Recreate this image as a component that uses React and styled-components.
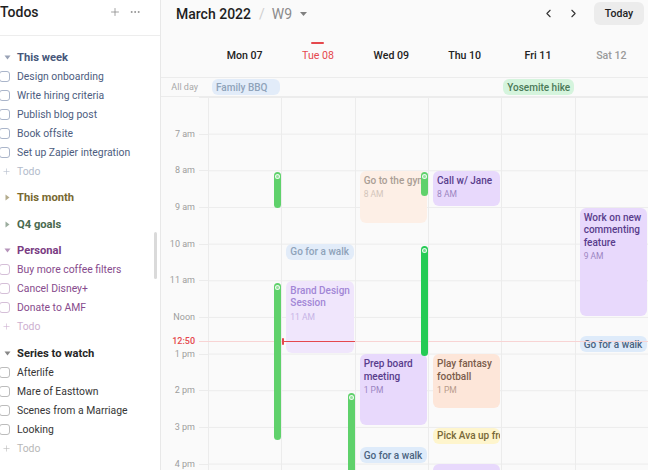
import React from "react";
import styled, { createGlobalStyle } from "styled-components";
import { ChevronLeft, ChevronRight, Plus, Ellipsis } from "lucide-react";

const HOUR = 36.67;
const START = 6;
const TODAY = 1;
const NOW = 12.654;

const GlobalStyle = createGlobalStyle`
  html, body { margin: 0; padding: 0; }
  body {
    font-family: Roboto, "Noto Sans", sans-serif;
    background: #fff;
    color: #222;
    -webkit-font-smoothing: antialiased;
  }
  * { box-sizing: border-box; }
`;

const Page = styled.div`
  display: flex;
  width: 648px;
  height: 470px;
  overflow: hidden;
`;

/* ---------- sidebar ---------- */

const tones = {
  slate: { title: "#47577a", text: "#4d5d80", box: "#aab5ca", add: "#b3bccb" },
  olive: { title: "#776830", text: "#776830", box: "#cfc49a", add: "#c7bf9c" },
  green: { title: "#4a6a4f", text: "#4a6a4f", box: "#a9c0ab", add: "#b5c5b6" },
  plum: { title: "#7a3c83", text: "#874b8d", box: "#d5bfd8", add: "#cdb0d0" },
  ink: { title: "#262626", text: "#363636", box: "#bcbcbc", add: "#b8b8b8" },
};

const Sidebar = styled.aside`
  position: relative;
  width: 161px;
  flex-shrink: 0;
  background: #fff;
  border-right: 1px solid #e8e8e8;
  overflow: hidden;
`;

const SidebarHeader = styled.div`
  height: 36px;
  display: flex;
  align-items: center;
  padding: 0 19px 12px 0;
  border-bottom: 1px solid #ededed;
`;

const SidebarTitle = styled.div`
  flex: 1;
  font-size: 14px;
  font-weight: 500;
  color: #1f1f1f;
`;

const HeaderIcon = styled.span`
  display: flex;
  color: #8a8a8a;
  margin-left: 8px;
`;

const TodoList = styled.div`
  padding-top: 11.5px;
`;

const Section = styled.div`
  margin-bottom: 7.6px;
`;

const SectionHead = styled.div`
  height: 19px;
  display: flex;
  align-items: center;
  font-size: 11.2px;
  font-weight: 700;
  color: ${(p) => tones[p.$tone].title};
`;

const Caret = styled.span`
  width: 17px;
  display: flex;
  padding-left: ${(p) => (p.$open ? "4px" : "5px")};
  color: ${(p) => tones[p.$tone].title};
  opacity: 0.55;
`;

const Row = styled.div`
  height: 19px;
  display: flex;
  align-items: center;
  font-size: 10.4px;
  color: ${(p) => tones[p.$tone].text};
  white-space: nowrap;
`;

const Check = styled.span`
  width: 11px;
  height: 11px;
  margin-left: -1px;
  margin-right: 7px;
  border: 1px solid ${(p) => tones[p.$tone].box};
  border-radius: 3px;
  background: #fff;
  flex-shrink: 0;
`;

const AddRow = styled(Row)`
  color: ${(p) => tones[p.$tone].add};
`;

const AddIcon = styled.span`
  width: 17px;
  display: flex;
  padding-left: 2px;
`;

const ScrollThumb = styled.div`
  position: absolute;
  right: 3px;
  top: 232px;
  width: 3px;
  height: 47px;
  border-radius: 2px;
  background: #dadada;
`;

const sections = [
  {
    title: "This week",
    tone: "slate",
    open: true,
    items: [
      "Design onboarding",
      "Write hiring criteria",
      "Publish blog post",
      "Book offsite",
      "Set up Zapier integration",
    ],
  },
  { title: "This month", tone: "olive", open: false, items: [] },
  { title: "Q4 goals", tone: "green", open: false, items: [] },
  {
    title: "Personal",
    tone: "plum",
    open: true,
    items: ["Buy more coffee filters", "Cancel Disney+", "Donate to AMF"],
  },
  {
    title: "Series to watch",
    tone: "ink",
    open: true,
    items: ["Afterlife", "Mare of Easttown", "Scenes from a Marriage", "Looking"],
  },
];

const CaretIcon = ({ open }) =>
  open ? (
    <svg width="7" height="5" viewBox="0 0 7 5">
      <path d="M0.5 0.5h6L3.5 4.5z" fill="currentColor" />
    </svg>
  ) : (
    <svg width="5" height="7" viewBox="0 0 5 7">
      <path d="M0.5 0.5v6L4.5 3.5z" fill="currentColor" />
    </svg>
  );

/* ---------- calendar ---------- */

const Main = styled.main`
  flex: 1;
  min-width: 0;
  display: flex;
  flex-direction: column;
  background: #fafafa;
`;

const Toolbar = styled.div`
  height: 27px;
  flex-shrink: 0;
  display: flex;
  align-items: center;
  padding: 0 4px 0 15px;
`;

const Title = styled.div`
  flex: 1;
  display: flex;
  align-items: center;
  font-size: 14px;
  font-weight: 500;
  color: #1e1e1e;
`;

const Slash = styled.span`
  color: #cfcfcf;
  font-weight: 400;
  margin: 0 7px 0 8px;
`;

const Week = styled.span`
  color: #8b8b8b;
  font-weight: 400;
`;

const WeekCaret = styled.span`
  display: flex;
  color: #808080;
  margin-left: 8px;
`;

const NavButton = styled.button`
  width: 25px;
  height: 23px;
  display: flex;
  align-items: center;
  justify-content: center;
  border: 0;
  background: transparent;
  color: #333;
  padding: 0;
`;

const TodayButton = styled.button`
  margin-left: 8px;
  width: 50px;
  height: 23px;
  border: 0;
  border-radius: 6px;
  background: #ececec;
  font-family: inherit;
  font-size: 10.5px;
  font-weight: 500;
  color: #222;
`;

const Columns = styled.div`
  flex: 1;
  display: grid;
  grid-template-columns: repeat(6, 1fr);
`;

const Gutter = styled.div`
  width: 47px;
  flex-shrink: 0;
`;

const DayHeadRow = styled.div`
  height: 51px;
  flex-shrink: 0;
  display: flex;
  border-bottom: 1px solid #ececec;
`;

const DayHead = styled.div`
  display: flex;
  flex-direction: column;
  align-items: center;
  justify-content: flex-end;
  padding-bottom: 13px;
  font-size: 10.6px;
  font-weight: ${(p) => (p.$today ? 400 : 500)};
  line-height: 16px;
  color: ${(p) => (p.$today ? "#e5484d" : p.$weekend ? "#9a9a9a" : "#222")};
`;

const TodayMark = styled.span`
  width: 13px;
  height: 2px;
  border-radius: 1px;
  background: ${(p) => (p.$on ? "#e5484d" : "transparent")};
  margin-bottom: 4px;
`;

const AllDayRow = styled.div`
  height: 19px;
  flex-shrink: 0;
  display: flex;
  align-items: center;
  border-bottom: 1px solid #ececec;
`;

const AllDayLabel = styled(Gutter)`
  text-align: right;
  padding-right: 10px;
  font-size: 9px;
  color: #a8a8a8;
`;

const AllDayCell = styled.div`
  padding: 0 1px 0 4px;
`;

const Body = styled.div`
  flex: 1;
  position: relative;
  display: flex;
  overflow: hidden;
`;

const TimeGutter = styled(Gutter)`
  display: flex;
  flex-direction: column;
`;

const HourSlot = styled.div`
  position: relative;
  height: ${HOUR}px;
  flex-shrink: 0;
  &::after {
    content: "";
    position: absolute;
    top: 0;
    right: 0;
    width: 9px;
    height: 1px;
    background: #ececec;
  }
`;

const HourLabel = styled.div`
  margin-top: -6px;
  padding-right: 13px;
  text-align: right;
  font-size: 9px;
  line-height: 12px;
  color: #9d9d9d;
  visibility: ${(p) => (p.$hidden ? "hidden" : "visible")};
`;

const Grid = styled(Columns)`
  align-self: flex-start;
  height: ${HOUR * 11}px;
  background-image: linear-gradient(to bottom, #ececec 1px, transparent 1px);
  background-size: 100% ${HOUR}px;
`;

const DayColumn = styled.div`
  position: relative;
  border-left: 1px solid #ececec;
`;

const eventTones = {
  purple: { bg: "#e8d9fc", fg: "#593d8c", sub: "#9c86c2" },
  purplePast: { bg: "#f0e6fc", fg: "#a287d6", sub: "#c6b4e6" },
  peach: { bg: "#fde6d9", fg: "#7b5c4b", sub: "#b89b8b" },
  peachPast: { bg: "#fdefe6", fg: "#aa9e95", sub: "#d3c5bb" },
  blue: { bg: "#deebfa", fg: "#4a6380", sub: "#8aa0b8" },
  bluePast: { bg: "#e2ecf9", fg: "#8fa3ba", sub: "#b0c0d0" },
  yellow: { bg: "#fef5cd", fg: "#786838", sub: "#b0a070" },
  green: { bg: "#d5f4dd", fg: "#4b7a58", sub: "#86aa90" },
};

const Event = styled.div`
  position: absolute;
  left: 4px;
  right: 1px;
  border-radius: 6px;
  overflow: hidden;
  padding: 4px 1px 4px 4px;
  background: ${(p) => eventTones[p.$tone].bg};
  color: ${(p) => eventTones[p.$tone].fg};
  font-size: 10px;
  font-weight: 500;
  line-height: 12.5px;
  white-space: ${(p) => (p.$nowrap ? "nowrap" : "normal")};
`;

const Pill = styled.div`
  height: 16px;
  display: flex;
  align-items: center;
  padding: 0 4px;
  border-radius: 6px;
  overflow: hidden;
  white-space: nowrap;
  background: ${(p) => eventTones[p.$tone].bg};
  color: ${(p) => eventTones[p.$tone].fg};
  font-size: 10px;
  font-weight: 500;
`;

const TimedPill = styled(Pill)`
  position: absolute;
  left: 4px;
  right: 1px;
`;

const EventTime = styled.div`
  margin-top: 1px;
  font-size: 8.5px;
  font-weight: 400;
  color: ${(p) => eventTones[p.$tone].sub};
`;

const Streak = styled.div`
  position: absolute;
  right: 0;
  width: 7px;
  border-radius: 4px;
  background: ${(p) => (p.$bright ? "#25cb55" : "#5fd16b")};
  z-index: 2;
  &::before {
    content: "";
    position: absolute;
    top: 2px;
    left: 1px;
    width: 3px;
    height: 3px;
    border-radius: 50%;
    border: 1px solid rgba(255, 255, 255, 0.85);
    background: rgba(255, 255, 255, 0.35);
  }
`;

const NowLine = styled.div`
  position: absolute;
  left: 38px;
  right: 0;
  height: 1px;
  background: #f8d4d4;
  z-index: 1;
`;

const NowLabel = styled.div`
  position: absolute;
  left: 0;
  width: 47px;
  padding-right: 13px;
  text-align: right;
  font-size: 9px;
  line-height: 12px;
  font-weight: 500;
  color: #e5484d;
`;

const NowBar = styled.div`
  position: absolute;
  left: 0;
  right: 0;
  height: 1.5px;
  background: #e5484d;
  z-index: 3;
  &::before {
    content: "";
    position: absolute;
    left: 0;
    top: -3px;
    width: 2px;
    height: 7px;
    border-radius: 1px;
    background: #e5484d;
  }
`;

const days = [
  { label: "Mon 07" },
  { label: "Tue 08", today: true },
  { label: "Wed 09" },
  { label: "Thu 10" },
  { label: "Fri 11" },
  { label: "Sat 12", weekend: true },
];

const allDay = [
  { day: 0, title: "Family BBQ", tone: "bluePast" },
  { day: 4, title: "Yosemite hike", tone: "green" },
];

const events = [
  { day: 1, start: 10, title: "Go for a walk", tone: "bluePast", pill: true },
  { day: 1, start: 11, end: 13, title: "Brand Design Session", time: "11 AM", tone: "purplePast" },
  { day: 2, start: 8, end: 9.47, title: "Go to the gym", time: "8 AM", tone: "peachPast", nowrap: true },
  { day: 2, start: 13, end: 14.97, title: "Prep board meeting", time: "1 PM", tone: "purple" },
  { day: 2, start: 15.55, title: "Go for a walk", tone: "blue", pill: true },
  { day: 3, start: 8, end: 9, title: "Call w/ Jane", time: "8 AM", tone: "purple" },
  { day: 3, start: 13, end: 14.5, title: "Play fantasy football", time: "1 PM", tone: "peach" },
  { day: 3, start: 15.02, title: "Pick Ava up from school", tone: "yellow", pill: true },
  { day: 3, start: 16, end: 17, title: "", tone: "purple" },
  { day: 5, start: 9, end: 12, title: "Work on new commenting feature", time: "9 AM", tone: "purple" },
  { day: 5, start: 12.53, title: "Go for a walk", tone: "blue", pill: true },
];

const streaks = [
  { day: 0, start: 8.045, end: 9.03 },
  { day: 0, start: 11.07, end: 15.35 },
  { day: 1, start: 14.07, end: 17 },
  { day: 2, start: 8.05, end: 8.7 },
  { day: 2, start: 10.06, end: 13.06, bright: true },
];

const hours = ["", "7 am", "8 am", "9 am", "10 am", "11 am", "Noon", "1 pm", "2 pm", "3 pm", "4 pm"];

const y = (h) => (h - START) * HOUR;

export default function App() {
  return (
    <>
      <GlobalStyle />
      <Page>
        <Sidebar>
          <SidebarHeader>
            <SidebarTitle>Todos</SidebarTitle>
            <HeaderIcon>
              <Plus size={12} strokeWidth={1.6} />
            </HeaderIcon>
            <HeaderIcon>
              <Ellipsis size={12} strokeWidth={1.8} />
            </HeaderIcon>
          </SidebarHeader>
          <TodoList>
            {sections.map((s) => (
              <Section key={s.title}>
                <SectionHead $tone={s.tone}>
                  <Caret $tone={s.tone} $open={s.open}>
                    <CaretIcon open={s.open} />
                  </Caret>
                  {s.title}
                </SectionHead>
                {s.items.map((item) => (
                  <Row key={item} $tone={s.tone}>
                    <Check $tone={s.tone} />
                    {item}
                  </Row>
                ))}
                {s.open && (
                  <AddRow $tone={s.tone}>
                    <AddIcon>
                      <Plus size={9} strokeWidth={1.6} />
                    </AddIcon>
                    Todo
                  </AddRow>
                )}
              </Section>
            ))}
          </TodoList>
          <ScrollThumb />
        </Sidebar>

        <Main>
          <Toolbar>
            <Title>
              March 2022
              <Slash>/</Slash>
              <Week>W9</Week>
              <WeekCaret>
                <svg width="7" height="4" viewBox="0 0 7 4">
                  <path d="M0 0h7L3.5 4z" fill="currentColor" />
                </svg>
              </WeekCaret>
            </Title>
            <NavButton>
              <ChevronLeft size={13} strokeWidth={2} />
            </NavButton>
            <NavButton>
              <ChevronRight size={13} strokeWidth={2} />
            </NavButton>
            <TodayButton>Today</TodayButton>
          </Toolbar>

          <DayHeadRow>
            <Gutter />
            <Columns>
              {days.map((d) => (
                <DayHead key={d.label} $today={d.today} $weekend={d.weekend}>
                  <TodayMark $on={d.today} />
                  {d.label}
                </DayHead>
              ))}
            </Columns>
          </DayHeadRow>

          <AllDayRow>
            <AllDayLabel>All day</AllDayLabel>
            <Columns>
              {days.map((d, i) => (
                <AllDayCell key={d.label}>
                  {allDay
                    .filter((e) => e.day === i)
                    .map((e) => (
                      <Pill key={e.title} $tone={e.tone}>
                        {e.title}
                      </Pill>
                    ))}
                </AllDayCell>
              ))}
            </Columns>
          </AllDayRow>

          <Body>
            <TimeGutter>
              {hours.map((h, i) => (
                <HourSlot key={i}>
                  <HourLabel $hidden={!h}>{h || "6 am"}</HourLabel>
                </HourSlot>
              ))}
            </TimeGutter>
            <NowLine style={{ top: y(NOW) }} />
            <NowLabel style={{ top: y(NOW) - 6 }}>12:50</NowLabel>
            <Grid>
              {days.map((d, i) => (
                <DayColumn key={d.label}>
                  {events
                    .filter((e) => e.day === i)
                    .map((e, k) =>
                      e.pill ? (
                        <TimedPill key={k} $tone={e.tone} style={{ top: y(e.start) }}>
                          {e.title}
                        </TimedPill>
                      ) : (
                        <Event
                          key={k}
                          $tone={e.tone}
                          $nowrap={e.nowrap}
                          style={{ top: y(e.start) + 0.5, height: (e.end - e.start) * HOUR - 1.5 }}
                        >
                          {e.title}
                          {e.time && <EventTime $tone={e.tone}>{e.time}</EventTime>}
                        </Event>
                      )
                    )}
                  {streaks
                    .filter((s) => s.day === i)
                    .map((s, k) => (
                      <Streak
                        key={k}
                        $bright={s.bright}
                        style={{ top: y(s.start), height: (s.end - s.start) * HOUR }}
                      />
                    ))}
                  {i === TODAY && <NowBar style={{ top: y(NOW) - 0.25 }} />}
                </DayColumn>
              ))}
            </Grid>
          </Body>
        </Main>
      </Page>
    </>
  );
}
